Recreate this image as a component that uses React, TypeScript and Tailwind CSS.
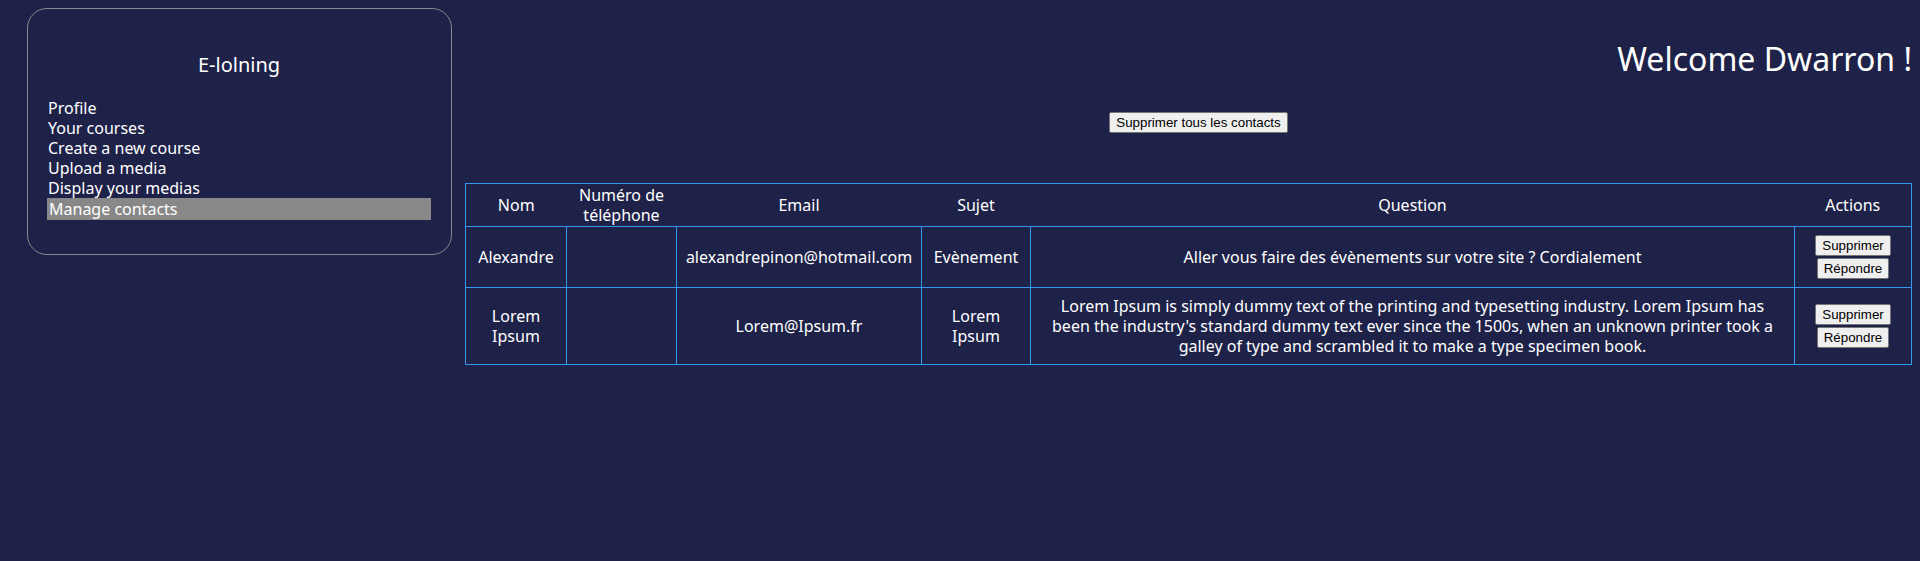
import React from "react";

const menuItems = ["Profile", "Your courses", "Create a new course", "Upload a media", "Display your medias"];

const contacts = [
    {
        nom: "Alexandre",
        tel: "",
        email: "alexandrepinon@hotmail.com",
        sujet: "Evènement",
        question: "Aller vous faire des évènements sur votre site ? Cordialement",
    },
    {
        nom: "Lorem Ipsum",
        tel: "",
        email: "Lorem@Ipsum.fr",
        sujet: "Lorem Ipsum",
        question:
            "Lorem Ipsum is simply dummy text of the printing and typesetting industry. Lorem Ipsum has been the industry's standard dummy text ever since the 1500s, when an unknown printer took a galley of type and scrambled it to make a type specimen book.",
    },
];

const NativeButton = ({ children }: { children: React.ReactNode }) => (
    <button className="h-[21px] px-[6px] bg-[#efefef] text-black border border-[#767676] rounded-[2px] font-['Liberation_Sans',Arial,sans-serif] text-[13.333px] leading-none whitespace-nowrap">
        {children}
    </button>
);

const Sidebar = () => {
    return (
        <aside className="ml-[27px] mt-[8px] w-[425px] h-[247px] shrink-0 border border-[#888888] rounded-[20px] pl-[19px] pr-[20px] pt-[44px]">
            <h2 className="text-center text-[20px] leading-6 text-white">E-lolning</h2>
            <ul className="mt-[21px] text-white text-[16px] leading-5">
                {menuItems.map((item, index) => (
                    <li key={`menu_${index}`} className="pl-px h-5">
                        {item}
                    </li>
                ))}
                <li className="pl-[2px] h-[22px] leading-[22px] bg-[#888888]">Manage contacts</li>
            </ul>
        </aside>
    );
};

export default function App() {
    return (
        <div className="min-h-[561px] bg-[#1e2248] flex font-['Noto_Sans',sans-serif] text-white">
            <Sidebar />
            <main className="flex-1 ml-[13px] pr-[9px] pt-[39px] flex flex-col">
                <h1 className="text-right text-[32px] leading-10 text-white">Welcome Dwarron !</h1>
                <div className="mt-[33px] pl-[20px] flex justify-center">
                    <NativeButton>Supprimer tous les contacts</NativeButton>
                </div>
                <table className="mt-[50px] w-full table-fixed border-collapse border border-[#3399ee] text-[16px] leading-5 text-center">
                    <colgroup>
                        <col className="w-[101px]" />
                        <col className="w-[110px]" />
                        <col className="w-[245px]" />
                        <col className="w-[109px]" />
                        <col className="w-[764px]" />
                        <col className="w-[117px]" />
                    </colgroup>
                    <thead>
                        <tr className="border-b border-[#3399ee]">
                            <th className="font-normal px-2 py-px">Nom</th>
                            <th className="font-normal px-2 py-px">Numéro de téléphone</th>
                            <th className="font-normal px-2 py-px">Email</th>
                            <th className="font-normal px-2 py-px">Sujet</th>
                            <th className="font-normal px-2 py-px">Question</th>
                            <th className="font-normal px-2 py-px">Actions</th>
                        </tr>
                    </thead>
                    <tbody>
                        {contacts.map((contact, index) => (
                            <tr key={`contact_${index}`}>
                                <td className="border border-[#3399ee] px-2 py-2">{contact.nom}</td>
                                <td className="border border-[#3399ee] px-2 py-2">{contact.tel}</td>
                                <td className="border border-[#3399ee] px-2 py-2">{contact.email}</td>
                                <td className="border border-[#3399ee] px-2 py-2">{contact.sujet}</td>
                                <td className="border border-[#3399ee] px-3 py-2">{contact.question}</td>
                                <td className="border border-[#3399ee] px-1 py-2">
                                    <div className="flex flex-col items-center gap-[2px]">
                                        <NativeButton>Supprimer</NativeButton>
                                        <NativeButton>Répondre</NativeButton>
                                    </div>
                                </td>
                            </tr>
                        ))}
                    </tbody>
                </table>
            </main>
        </div>
    );
}
